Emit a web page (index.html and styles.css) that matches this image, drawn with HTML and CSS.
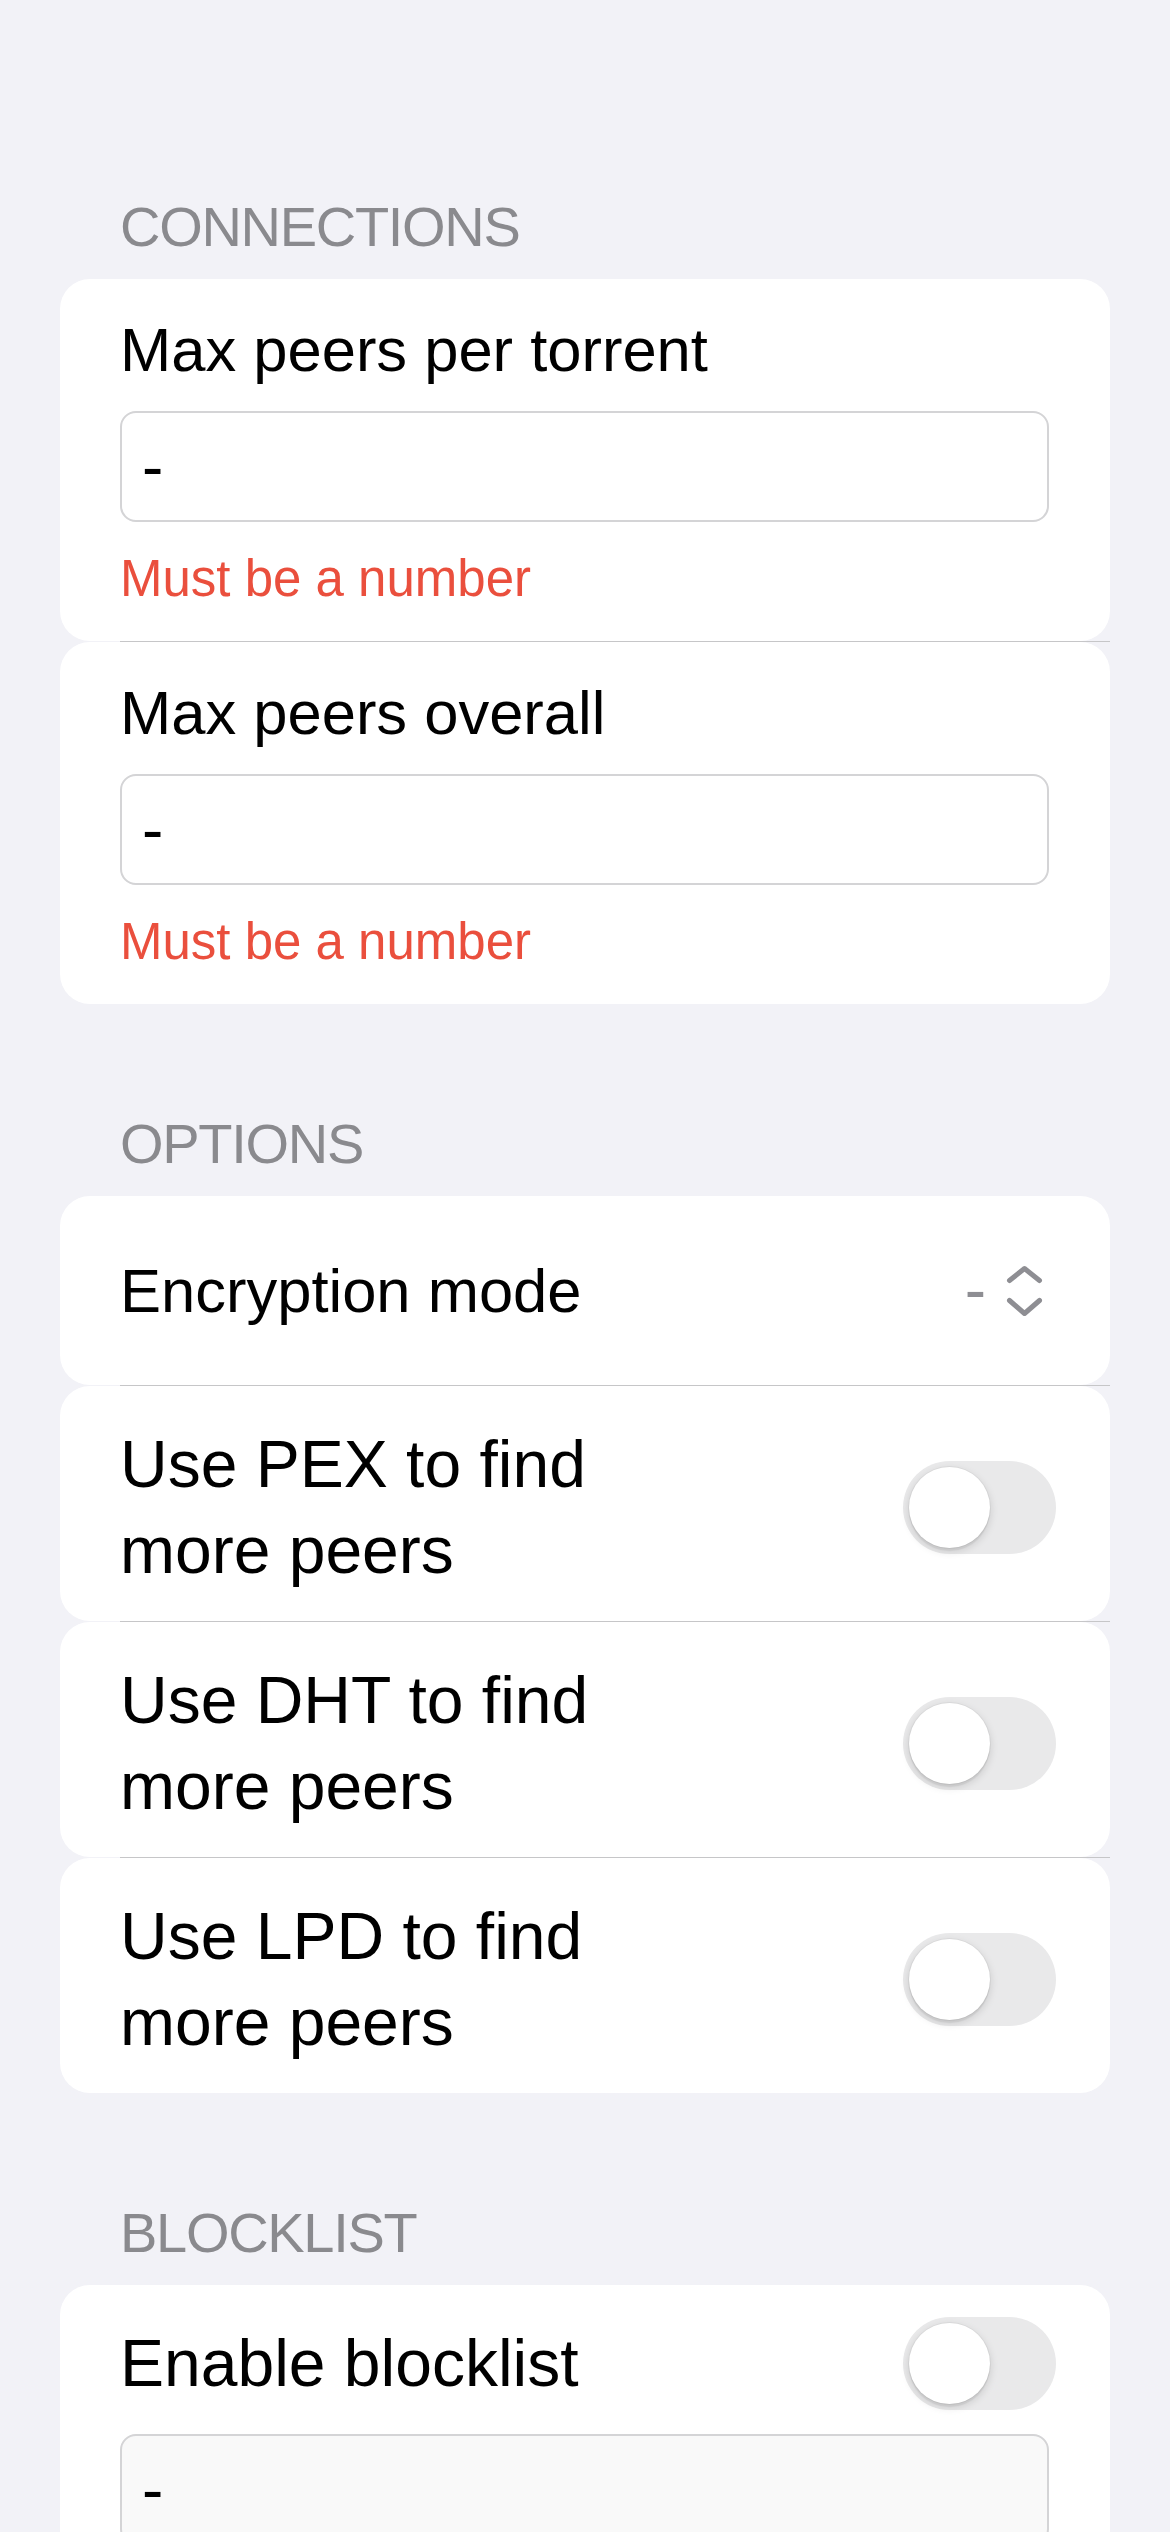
FILE: index.html
```html
<!DOCTYPE html>
<html lang="en">
<head>
<meta charset="utf-8">
<title>Settings</title>
<link rel="stylesheet" href="styles.css">
</head>
<body>
<main class="page">
  <section class="section">
    <h2 class="section-title">CONNECTIONS</h2>
    <div class="group">
      <div class="item field">
        <div class="label">Max peers per torrent</div>
        <div class="input"><span>-</span></div>
        <div class="error">Must be a number</div>
      </div>
      <div class="sep"></div>
      <div class="item field">
        <div class="label">Max peers overall</div>
        <div class="input"><span>-</span></div>
        <div class="error">Must be a number</div>
      </div>
    </div>
  </section>

  <section class="section">
    <h2 class="section-title">OPTIONS</h2>
    <div class="group">
      <div class="item select-row">
        <div class="label">Encryption mode</div>
        <div class="select-value">
          <span class="dash">-</span>
          <svg class="chevrons" width="37" height="54" viewBox="0 0 37 54" aria-hidden="true">
            <path d="M3.5 16.5 L18.5 4.5 L33.5 16.5" fill="none" stroke="#8e8e93" stroke-width="5" stroke-linecap="round" stroke-linejoin="round"/>
            <path d="M3.5 36.5 L18.5 49.5 L33.5 36.5" fill="none" stroke="#8e8e93" stroke-width="5" stroke-linecap="round" stroke-linejoin="round"/>
          </svg>
        </div>
      </div>
      <div class="sep"></div>
      <div class="item toggle-row">
        <div class="label big wrap">Use PEX to find more peers</div>
        <div class="switch"><div class="knob"></div></div>
      </div>
      <div class="sep"></div>
      <div class="item toggle-row">
        <div class="label big wrap">Use DHT to find more peers</div>
        <div class="switch"><div class="knob"></div></div>
      </div>
      <div class="sep"></div>
      <div class="item toggle-row">
        <div class="label big wrap">Use LPD to find more peers</div>
        <div class="switch"><div class="knob"></div></div>
      </div>
    </div>
  </section>

  <section class="section">
    <h2 class="section-title">BLOCKLIST</h2>
    <div class="group">
      <div class="item blocklist">
        <div class="blocklist-head">
          <div class="label big">Enable blocklist</div>
          <div class="switch"><div class="knob"></div></div>
        </div>
        <div class="input disabled"><span>-</span></div>
      </div>
    </div>
  </section>
</main>
</body>
</html>
```

FILE: styles.css
```css
* { box-sizing: border-box; }

html, body {
  margin: 0;
  padding: 0;
  background: #f2f2f7;
}

body {
  font-family: "Liberation Sans", Arial, sans-serif;
  color: #000;
}

.page {
  padding: 193px 60px 80px;
}

.section + .section {
  margin-top: 106px;
}

.section-title {
  margin: 0 0 19px;
  padding-left: 60px;
  font-size: 56px;
  line-height: 67px;
  font-weight: 400;
  letter-spacing: -1.3px;
  color: #8a8a8e;
}

.group {
  display: flex;
  flex-direction: column;
}

.item {
  background: #fff;
  border-radius: 30px;
}

.sep {
  height: 1px;
  margin-left: 60px;
  background: #c6c6c8;
}

.label {
  font-size: 61.5px;
  line-height: 73px;
}

.label.big {
  font-size: 66px;
}

/* text-input fields */
.field {
  padding: 34px 61px 32px 60px;
}

.input {
  margin-top: 25px;
  height: 111px;
  border: 2px solid #d4d4d6;
  border-radius: 16px;
  padding: 0 20px;
  display: flex;
  align-items: center;
  font-size: 64px;
  background: #fff;
}

.input.disabled {
  background: #f9f9f9;
}

.error {
  margin-top: 27px;
  font-size: 51px;
  line-height: 60px;
  color: #ea4f3d;
}

/* select row */
.select-row {
  min-height: 189px;
  padding: 0 67px 0 60px;
  display: flex;
  align-items: center;
  justify-content: space-between;
}

.select-value {
  display: flex;
  align-items: center;
  gap: 20px;
}

.dash {
  font-size: 64px;
  line-height: 73px;
  color: #8e8e93;
}

.chevrons {
  display: block;
}

/* toggle rows */
.toggle-row {
  padding: 35px 54px 28px 60px;
  display: flex;
  align-items: center;
  justify-content: space-between;
}

.label.wrap {
  max-width: 560px;
  line-height: 86px;
}

.switch {
  width: 153px;
  height: 93px;
  flex: none;
  border-radius: 47px;
  background: #e9e9ea;
  padding: 6px;
  display: flex;
  align-items: center;
}

.knob {
  width: 81px;
  height: 81px;
  border-radius: 50%;
  background: #fff;
  box-shadow: 0 3px 9px rgba(0, 0, 0, 0.15), 0 3px 1px rgba(0, 0, 0, 0.05), 0 0 0 1px rgba(0, 0, 0, 0.04);
}

/* blocklist */
.blocklist {
  padding: 32px 61px 60px 60px;
}

.blocklist-head {
  display: flex;
  align-items: center;
  justify-content: space-between;
  margin-right: -7px;
}

.blocklist .input {
  margin-top: 24px;
}
```
